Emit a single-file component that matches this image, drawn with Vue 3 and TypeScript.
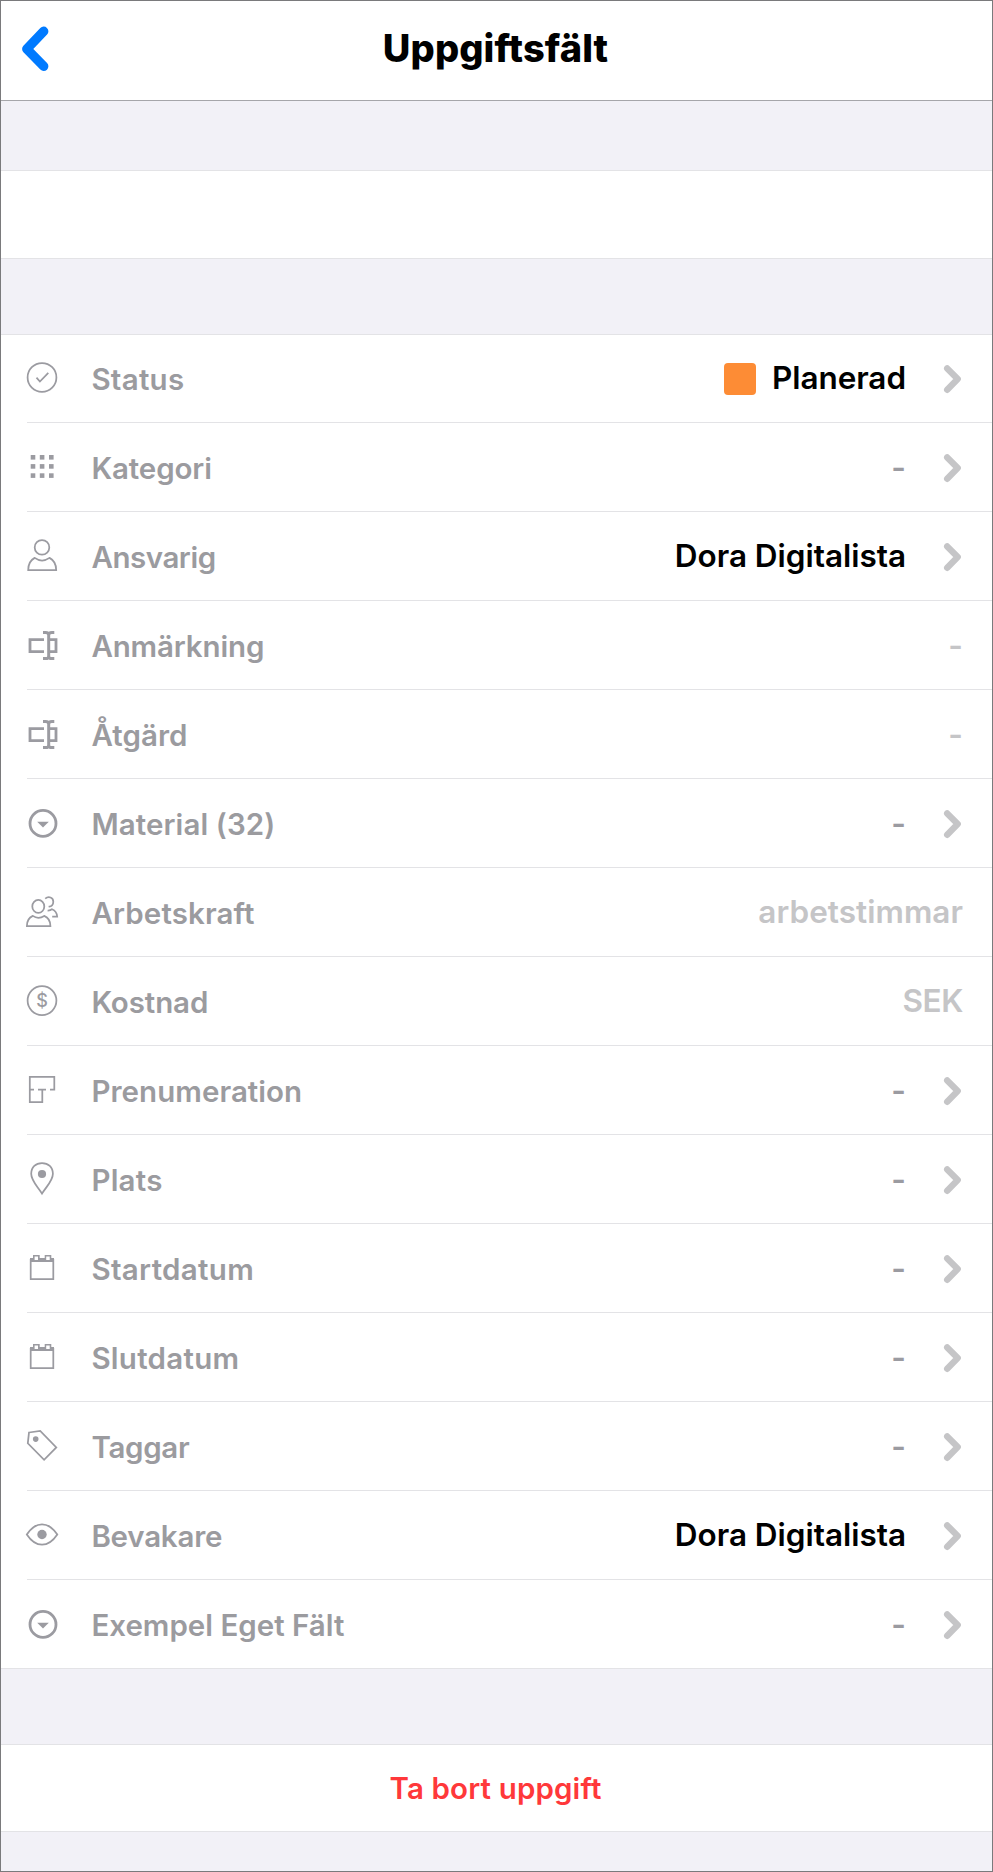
<script setup lang="ts">
type IconName =
  | 'check' | 'grid' | 'person' | 'textfield' | 'dropdown' | 'people'
  | 'dollar' | 'plan' | 'pin' | 'calendar' | 'tag' | 'eye'

interface Field {
  label: string
  icon: IconName
  tracking: number
  value?: string
  valueTracking?: number
  swatch?: boolean
  placeholder?: string
}

const fields: Field[] = [
  { label: 'Status', icon: 'check', tracking: 0.28, value: 'Planerad', valueTracking: -0.06, swatch: true },
  { label: 'Kategori', icon: 'grid', tracking: -0.12 },
  { label: 'Ansvarig', icon: 'person', tracking: -0.45, value: 'Dora Digitalista', valueTracking: -0.03 },
  { label: 'Anmärkning', icon: 'textfield', tracking: -0.14, placeholder: '-' },
  { label: 'Åtgärd', icon: 'textfield', tracking: 0.08, placeholder: '-' },
  { label: 'Material (32)', icon: 'dropdown', tracking: 0.1 },
  { label: 'Arbetskraft', icon: 'people', tracking: 0.13, placeholder: 'arbetstimmar', valueTracking: 0.04 },
  { label: 'Kostnad', icon: 'dollar', tracking: -0.1, placeholder: 'SEK', valueTracking: -0.4 },
  { label: 'Prenumeration', icon: 'plan', tracking: 0.05 },
  { label: 'Plats', icon: 'pin', tracking: 0.22 },
  { label: 'Startdatum', icon: 'calendar', tracking: 0.33 },
  { label: 'Slutdatum', icon: 'calendar', tracking: 0.28 },
  { label: 'Taggar', icon: 'tag', tracking: -0.32 },
  { label: 'Bevakare', icon: 'eye', tracking: -0.22, value: 'Dora Digitalista', valueTracking: -0.03 },
  { label: 'Exempel Eget Fält', icon: 'dropdown', tracking: 0 },
]

const track = (px?: number) => ({ letterSpacing: `${px ?? 0}px` })
</script>

<template>
  <main class="screen">
    <header class="navbar">
      <button class="back" aria-label="Tillbaka">
        <svg width="32" height="50" viewBox="0 0 32 50">
          <path d="M24.7 7.3 7.8 25 24.7 42.3" fill="none" stroke="#007aff" stroke-width="9.4" stroke-linecap="round" stroke-linejoin="round" />
        </svg>
      </button>
      <h1 class="title">Uppgiftsfält</h1>
    </header>

    <div class="gap gap-top"></div>
    <section class="blank"></section>
    <div class="gap gap-mid"></div>

    <ul class="list">
      <li v-for="field in fields" :key="field.label" class="row">
        <svg class="icon" width="36" height="36" viewBox="0 0 36 36">
          <template v-if="field.icon === 'check'">
            <circle cx="18" cy="17.4" r="14.4" />
            <path d="M12.5 17.6l3.4 3.9 8.4-8.7" />
          </template>
          <template v-else-if="field.icon === 'grid'">
            <g class="solid">
              <template v-for="y in [6, 15.1, 24.3]" :key="y">
                <rect v-for="x in [6.7, 15.8, 25]" :key="x" :x="x" :y="y" width="4.6" height="4.6" />
              </template>
            </g>
          </template>
          <template v-else-if="field.icon === 'person'">
            <circle cx="18" cy="9.4" r="7.3" />
            <path d="M10.7 19.9C6.8 21.9 4.2 26.6 4.2 32.2H32.2C32.2 26.6 29.4 21.9 25.5 19.9Q18 25.2 10.7 19.9Z" />
          </template>
          <template v-else-if="field.icon === 'textfield'">
            <path class="w28" d="M20 12.6H6V24.6H20M25.5 12.6H32V24.6H25.5" />
            <path class="w30" d="M19 5.6H21.5Q24.7 5.6 24.7 8V29.2Q24.7 31.6 21.5 31.6H19M30.3 5.6H28Q24.7 5.6 24.7 8M30.3 31.6H28Q24.7 31.6 24.7 29.2" />
          </template>
          <template v-else-if="field.icon === 'dropdown'">
            <circle class="w28" cx="19" cy="18.4" r="13" />
            <path class="solid" d="M13.2 16.8H24.8L19 22.6Z" />
          </template>
          <template v-else-if="field.icon === 'people'">
            <ellipse cx="14.3" cy="12.4" rx="6" ry="6.5" />
            <path d="M8.8 21.9C5.5 23.4 2.9 27.4 2.9 32H26.4C26.4 27.4 23.8 23.4 20.2 21.9Q14.3 25.8 8.8 21.9Z" />
            <path d="M21.2 4.6C24.6 1.8 29.3 3.4 29.3 7.7C29.3 10.8 27.6 12.8 24.6 12.5M23.6 16.6Q26.6 16.7 28 15.2C31 16.4 33 19.2 33.2 22.7H28.2" />
          </template>
          <template v-else-if="field.icon === 'dollar'">
            <circle cx="18" cy="17.6" r="14.4" />
            <text class="currency" x="18" y="24">$</text>
          </template>
          <template v-else-if="field.icon === 'plan'">
            <path d="M26 17.5H30.3V4.8H5.8V30H18.3V17.5M5.8 17.5H10M14 17.5H22" />
          </template>
          <template v-else-if="field.icon === 'pin'">
            <path d="M18 32.6C13.6 25.4 7.2 20 7.2 12.8C7.2 5.8 11.8 2 18 2S28.9 5.8 28.9 12.8C28.9 20 22.4 25.4 18 32.6Z" />
            <circle class="solid" cx="18" cy="13" r="4.1" />
          </template>
          <template v-else-if="field.icon === 'calendar'">
            <path d="M6.7 9V29.2H29.3V9" />
            <path class="solid" fill-rule="evenodd" d="M6 8H9V5H15.7V8H20.7V5H27.3V8H30V12H6ZM10.6 6.6V10H14V6.6ZM22.2 6.6V10H25.7V6.6Z" />
          </template>
          <template v-else-if="field.icon === 'tag'">
            <path d="M5 4.5 16.2 3 32.3 19.4 20.1 31.8 3.8 15.3Z" />
            <circle class="solid" cx="11.7" cy="11.1" r="2.8" />
          </template>
          <template v-else>
            <path d="M2.8 17.5C11.8 3.9 24.2 3.9 33.3 17.5C24.2 31.1 11.8 31.1 2.8 17.5Z" />
            <circle class="solid" cx="18" cy="17.5" r="4.7" />
          </template>
        </svg>

        <span class="label" :style="track(field.tracking)">{{ field.label }}</span>

        <span v-if="field.placeholder" class="value placeholder" :class="{ dash: field.placeholder === '-' }" :style="track(field.valueTracking)">{{ field.placeholder }}</span>
        <template v-else>
          <i v-if="field.swatch" class="swatch"></i>
          <span class="value" :class="field.value ? 'filled' : 'dash'" :style="track(field.valueTracking)">{{ field.value ?? '-' }}</span>
          <svg class="chevron" width="20" height="32" viewBox="0 0 20 32">
            <path d="M5.2 5.4 15.7 16.1 5.2 26.8" fill="none" stroke="#c5c5c7" stroke-width="6.4" stroke-linecap="round" stroke-linejoin="round" />
          </svg>
        </template>
      </li>
    </ul>

    <div class="gap gap-bottom"></div>
    <button class="delete">Ta bort uppgift</button>
  </main>
</template>

<style>
body {
  margin: 0;
}
</style>

<style scoped>
.screen {
  box-sizing: border-box;
  width: 993px;
  height: 1872px;
  display: flex;
  flex-direction: column;
  overflow: hidden;
  border: 1px solid #7a7a7c;
  background: #f2f1f7;
  font-family: Inter, "Liberation Sans", sans-serif;
}

.screen > * {
  flex: none;
  box-sizing: border-box;
}

.navbar {
  display: grid;
  grid-template-columns: 80px 1fr 80px;
  height: 100px;
  border-bottom: 1px solid #a6a6aa;
  background: #fff;
}

.back {
  justify-self: start;
  align-self: start;
  margin: 23px 0 0 18px;
  padding: 0;
  border: 0;
  background: none;
}

.back svg {
  display: block;
}

.title {
  margin: 24px 2px 0 0;
  font-size: 38px;
  font-weight: 800;
  line-height: 46px;
  letter-spacing: 0.1px;
  text-align: center;
  color: #000;
}

.gap {
  border-bottom: 1px solid #e3e3e6;
}

.gap-top {
  height: 70px;
}

.blank {
  height: 88px;
  border-bottom: 1px solid #e3e3e6;
  background: #fff;
}

.gap-mid {
  height: 76px;
}

.list {
  margin: 0;
  padding: 0;
  list-style: none;
  background: #fff;
}

.row {
  box-sizing: border-box;
  display: flex;
  align-items: flex-start;
  height: 89px;
  padding-left: 23px;
  /* Hairline inset to the icon column */
  background: linear-gradient(#e3e3e6, #e3e3e6) 26px 100% / 100% 1px no-repeat;
}

.row:first-child {
  margin-top: -1px;
}

.row:last-child {
  background-position-x: 0;
}

.icon {
  flex: none;
  margin-top: 26px;
  fill: none;
  stroke: #9b9ba1;
  stroke-width: 1.75;
}

.icon .w28 {
  stroke-width: 2.8;
}

.icon .w30 {
  stroke-width: 3;
}

.icon .solid {
  fill: #9b9ba1;
  stroke: none;
}

.icon .currency {
  font: 500 18px Inter, sans-serif;
  text-anchor: middle;
  fill: #9b9ba1;
  stroke: none;
}

.label {
  flex: 1;
  margin: 27px 0 0 31.4px;
  font-size: 29.5px;
  font-weight: 600;
  line-height: 36px;
  white-space: nowrap;
  color: #9b9b9f;
}

.value {
  margin-top: 24px;
  font-size: 31.5px;
  font-weight: 600;
  line-height: 40px;
  white-space: nowrap;
}

.filled {
  color: #000;
}

.dash {
  margin-top: 25px;
  color: #9b9ba1;
}

.placeholder {
  margin-right: 29px;
  color: #c5c5c7;
}

.swatch {
  width: 32px;
  height: 32px;
  margin: 29px 16px 0 0;
  border-radius: 4px;
  background: #fd8c35;
}

.chevron {
  flex: none;
  margin: 29px 30px 0 36px;
}

.gap-bottom {
  height: 76px;
}

.delete {
  height: 87px;
  padding: 0 2px 0 0;
  border: 0;
  border-bottom: 1px solid #e3e3e6;
  background: #fff;
  font-family: inherit;
  font-size: 29.5px;
  font-weight: 600;
  line-height: 36px;
  letter-spacing: 0.14px;
  text-align: center;
  color: #ff383a;
}
</style>
